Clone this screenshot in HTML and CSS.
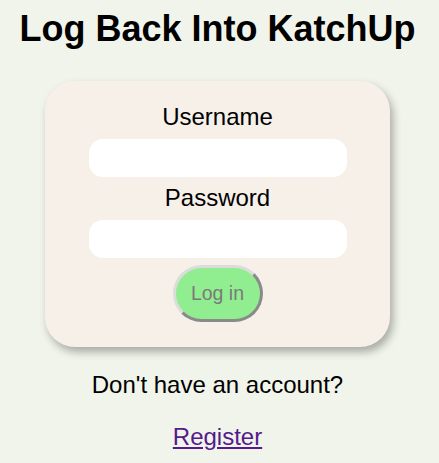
FILE: index.html
```html
<!DOCTYPE html>
<html lang="en">
<head>
<meta charset="utf-8">
<title>Log Back Into KatchUp</title>
<link rel="stylesheet" href="styles.css">
</head>
<body>
<main class="page">
  <h1 class="title">Log Back Into KatchUp</h1>
  <form class="card">
    <label class="label" for="username">Username</label>
    <input class="field" id="username" type="text">
    <label class="label" for="password">Password</label>
    <input class="field" id="password" type="password">
    <button class="login" type="button">Log in</button>
  </form>
  <p class="note">Don't have an account?</p>
  <p class="note"><a class="link" href="#register">Register</a></p>
</main>
</body>
</html>
```
FILE: styles.css
```css
html, body {
  margin: 0;
  padding: 0;
  background: #f1f4ea;
}
body {
  font-family: "Liberation Sans", Arial, sans-serif;
  color: #000;
}
.page {
  padding: 8px 12px 8px 8px;
  display: flex;
  flex-direction: column;
  align-items: center;
}
.title {
  margin: 0;
  font-size: 36px;
  font-weight: bold;
  line-height: normal;
  text-align: center;
}
.card {
  margin-top: 31px;
  width: 345px;
  box-sizing: border-box;
  padding: 22px 43px 25px;
  background: #f6f0e9;
  border-radius: 30px;
  box-shadow: 3px 5px 9px rgba(0, 0, 0, 0.3);
  display: flex;
  flex-direction: column;
  align-items: center;
}
.label {
  font-size: 24px;
  line-height: normal;
  margin-bottom: 8px;
}
.field {
  width: 258px;
  height: 38px;
  box-sizing: border-box;
  border: none;
  border-radius: 14px;
  background: #fff;
  margin: 0 0 7px;
  padding: 0 10px;
  font-size: 16px;
  outline: none;
}
.login {
  width: 90px;
  height: 57px;
  box-sizing: border-box;
  border-style: solid;
  border-width: 3px;
  border-color: #dcdcdc #8a8a8a #8a8a8a #dcdcdc;
  border-radius: 30px;
  background: #90ee90;
  color: #7a7a7a;
  font-family: "Liberation Sans", Arial, sans-serif;
  font-size: 19.5px;
  padding: 0;
}
.note {
  margin: 24px 0 0;
  font-size: 24px;
  line-height: normal;
  text-align: center;
}
.link {
  color: #551a8b;
  text-decoration: underline;
}
```
